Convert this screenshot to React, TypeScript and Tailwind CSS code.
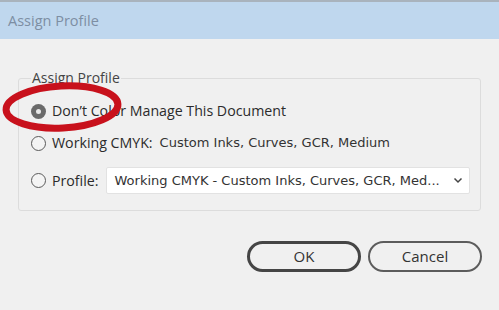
import React from 'react';

const ui = { fontFamily: '"Open Sans", "Noto Sans", sans-serif' };
const mono = { fontFamily: '"DejaVu Sans", Verdana, sans-serif' };

function Radio({ checked }: { checked?: boolean }) {
    return checked ? (
        <span className="w-[15px] h-[15px] rounded-full bg-[#6a6a6a] flex items-center justify-center shrink-0">
            <span className="w-[5px] h-[5px] rounded-full bg-[#e8e8e8]" />
        </span>
    ) : (
        <span className="w-[15px] h-[15px] rounded-full border-[1.5px] border-[#5a5a5a] bg-[#f4f4f4] shrink-0" />
    );
}

export default function App() {
    return (
        <div className="relative w-[499px] h-[310px] bg-[#f0f0f0] overflow-hidden text-[#2b2b2b]" style={ui}>
            {/* Title bar */}
            <div className="h-[39px] border-t-2 border-[#a9b3bd] bg-[#bfd7ee] flex items-center pl-[8px]">
                <span className="text-[14.5px] text-[#7d8ea3]">Assign Profile</span>
            </div>

            {/* Group */}
            <fieldset className="mx-[18px] mt-[31px] h-[141px] border border-[#dcdcdc] rounded-[3px] px-[12px]">
                <legend className="px-[1px] text-[14px] text-[#444] leading-[16px]">Assign Profile</legend>
                <div className="flex flex-col pt-[14px]">
                    <label className="flex items-center gap-[6px] h-[22px]">
                        <Radio checked />
                        <span className="text-[14.2px]">Don’t Color Manage This Document</span>
                    </label>
                    <label className="flex items-center gap-[6px] h-[22px] mt-[10px]">
                        <Radio />
                        <span className="text-[14.2px]">Working CMYK:</span>
                        <span className="text-[13px] text-[#333] ml-[1px]" style={mono}>Custom Inks, Curves, GCR, Medium</span>
                    </label>
                    <div className="flex items-center gap-[6px] h-[27px] mt-[13px]">
                        <Radio />
                        <span className="text-[14.2px]">Profile:</span>
                        <div className="ml-[1px] flex-1 h-[27px] bg-white border border-[#e2e2e2] rounded-[2px] flex items-center pl-[8px] pr-[6px] -mr-[2px]" style={mono}>
                            <span className="flex-1 text-[13px] text-[#333] whitespace-nowrap">Working CMYK - Custom Inks, Curves, GCR, Med...</span>
                            <svg width="10" height="7" viewBox="0 0 10 7" className="ml-[4px]">
                                <path d="M1.5 1.5 L5 5 L8.5 1.5" fill="none" stroke="#444" strokeWidth="1.5" />
                            </svg>
                        </div>
                    </div>
                </div>
            </fieldset>

            {/* Buttons */}
            <div className="flex justify-end gap-[7px] pr-[17px] mt-[30px]">
                <button className="w-[114px] h-[31px] rounded-full border-[3px] border-[#454545] text-[15px] text-[#333]">OK</button>
                <button className="w-[114px] h-[31px] rounded-full border-2 border-[#5c5c5c] text-[15px] text-[#333]">Cancel</button>
            </div>

            {/* Red annotation */}
            <svg className="absolute left-0 top-0 pointer-events-none" width="499" height="310">
                <ellipse cx="62" cy="107" rx="56" ry="21" fill="none" stroke="#c8111c" strokeWidth="7" transform="rotate(-3 62 107)" />
            </svg>
        </div>
    );
}
